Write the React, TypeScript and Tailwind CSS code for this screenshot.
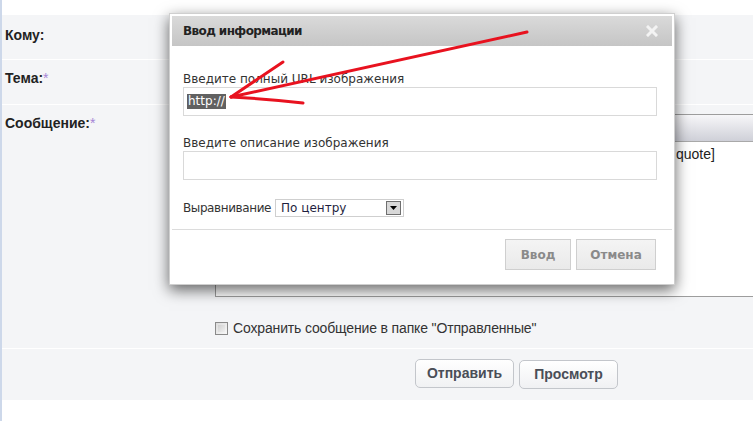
import React from "react";

function Arrows() {
  return (
    <svg className="absolute inset-0 pointer-events-none" width="753" height="421" viewBox="0 0 753 421">
      <g stroke="#e8121f" strokeWidth="3" strokeLinecap="round" fill="none">
        <path d="M527 32 L231 97" />
        <path d="M283 62 L231 97" />
        <path d="M231 97 Q270 99 303 103" />
      </g>
    </svg>
  );
}

function Modal() {
  return (
    <div
      className="absolute left-[169px] top-[13px] w-[506px] border border-[#cfcfcf] bg-white p-[2px] shadow-[0_5px_14px_rgba(0,0,0,0.6)]"
      style={{ fontFamily: '"DejaVu Sans", Verdana, sans-serif' }}
    >
      <div className="h-[30px] flex items-center justify-between pl-[11px] pr-[14px] bg-gradient-to-b from-[#dadada] to-[#c5c5c5]">
        <span className="text-[12px] font-bold tracking-[-0.6px] text-[#222]">Ввод информации</span>
        <svg width="12" height="12" viewBox="0 0 12 12">
          <g stroke="#f3f3f3" strokeWidth="3" strokeLinecap="square">
            <path d="M2 2 L10 10" />
            <path d="M10 2 L2 10" />
          </g>
        </svg>
      </div>
      <div className="pl-[11px] pr-[15px]">
        <div className="mt-[25px] text-[12px] leading-[16px] text-[#333]">Введите полный URL изображения</div>
        <div className="h-[29px] border border-[#d9d9d9] flex items-center pl-[3px]">
          <span className="bg-[#616161] text-white text-[12px] leading-[15px] px-[1px]">http://</span>
        </div>
        <div className="mt-[19px] text-[12px] leading-[16px] text-[#333]">Введите описание изображения</div>
        <div className="h-[29px] border border-[#d9d9d9]"></div>
        <div className="mt-[19px] h-[18px] flex items-center gap-[4px]">
          <span className="text-[12px] tracking-[-0.4px] text-[#333]">Выравнивание</span>
          <div className="w-[129px] h-[18px] border border-[#cfcfcf] flex items-center justify-between pl-[5px] pr-[2px]">
            <span className="text-[12px] text-[#1f1f3f]">По центру</span>
            <div className="w-[15px] h-[14px] bg-[#d8d8d8] border border-[#6f6f6f] flex items-center justify-center">
              <svg width="7" height="4" viewBox="0 0 7 4">
                <path d="M0 0 L7 0 L3.5 4 Z" fill="#000" />
              </svg>
            </div>
          </div>
        </div>
      </div>
      <div className="mt-[12px] h-px bg-[#dcdcdc]"></div>
      <div className="mt-[9px] mb-[12px] flex justify-end gap-[5px] pr-[16px]">
        <div className="w-[66px] h-[31px] border border-[#cfcfcf] bg-gradient-to-b from-[#f4f4f4] to-[#eaeaea] flex items-center justify-center text-[12px] font-bold text-[#8a8a8a]">
          Ввод
        </div>
        <div className="w-[80px] h-[31px] border border-[#cfcfcf] bg-gradient-to-b from-[#f4f4f4] to-[#eaeaea] flex items-center justify-center text-[12px] font-bold text-[#8a8a8a]">
          Отмена
        </div>
      </div>
    </div>
  );
}

export default function App() {
  return (
    <div
      className="relative w-[753px] h-[421px] overflow-hidden bg-white flex"
      style={{ fontFamily: '"Liberation Sans", Arial, sans-serif' }}
    >
      <div className="w-[2px] shrink-0 bg-[#cdd8ea]"></div>
      <div className="flex-1 min-w-0">
        <div className="h-[15px]"></div>
        <div className="bg-[#f4f5f7]">
          <div className="grid grid-cols-[213px_1fr]">
            {/* Row 1 */}
            <div className="col-span-2 grid grid-cols-[213px_1fr] h-[45px] border-b border-white">
              <div className="pl-[3px] pt-[12px] text-[14px] leading-[16px] font-bold text-[#222]">Кому:</div>
              <div></div>
            </div>
            {/* Row 2 */}
            <div className="col-span-2 grid grid-cols-[213px_1fr] h-[45px] border-b border-white">
              <div className="pl-[3px] pt-[10px] text-[14px] leading-[16px] font-bold text-[#222]">
                Тема:<span className="font-normal text-[#a586d6]">*</span>
              </div>
              <div></div>
            </div>
            {/* Row 3 */}
            <div className="col-span-2 grid grid-cols-[213px_1fr] h-[244px] border-b border-white">
              <div className="pl-[3px] pt-[10px] text-[14px] leading-[16px] font-bold text-[#222]">
                Сообщение:<span className="font-normal text-[#a586d6]">*</span>
              </div>
              <div className="pt-[9px] min-w-0">
                <div className="w-[600px] border border-[#9d9d9d]">
                  <div className="h-[27px] bg-gradient-to-b from-[#f7f7f9] to-[#cfd0d8] border-b border-[#a9a9a9]"></div>
                  <div className="h-[154px] bg-white pt-[4px] pl-[460px] text-[14px] leading-[16px] text-[#222]">quote]</div>
                </div>
                <div className="mt-[23px] flex items-center gap-[5px]">
                  <div className="w-[13px] h-[13px] border border-[#8a8a8a] bg-gradient-to-br from-[#dcdcdc] to-[#f8f8f8] p-[2px]">
                    <div className="w-full h-full bg-gradient-to-br from-[#d0d0d0] to-[#f0f0f0]"></div>
                  </div>
                  <span className="text-[14px] leading-[16px] tracking-[-0.15px] text-[#333]">Сохранить сообщение в папке "Отправленные"</span>
                </div>
              </div>
            </div>
            {/* Row 4 */}
            <div className="col-span-2 h-[51px] flex items-start pl-[413px] pt-[10px] gap-[5px]">
              <div className="w-[99px] h-[29px] rounded-[5px] border border-[#c3c6cb] bg-gradient-to-b from-white to-[#f0f1f3] flex items-center justify-center text-[14px] font-bold text-[#4a4e57]">
                Отправить
              </div>
              <div className="mt-[1px] w-[99px] h-[29px] rounded-[5px] border border-[#c3c6cb] bg-gradient-to-b from-white to-[#f0f1f3] flex items-center justify-center text-[14px] font-bold text-[#4a4e57]">
                Просмотр
              </div>
            </div>
          </div>
        </div>
      </div>
      <Modal />
      <Arrows />
    </div>
  );
}
